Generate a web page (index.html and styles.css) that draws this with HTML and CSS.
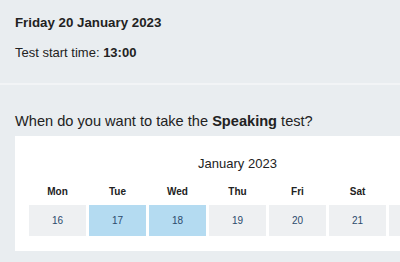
FILE: index.html
```html
<!DOCTYPE html>
<html lang="en">
<head>
<meta charset="utf-8">
<link rel="stylesheet" href="styles.css">
</head>
<body>
<section class="summary">
  <h2 class="date-title">Friday 20 January 2023</h2>
  <p class="start-time">Test start time: <strong>13:00</strong></p>
</section>
<div class="divider"></div>
<section class="booking">
  <p class="question">When do you want to take the <strong>Speaking</strong> test?</p>
  <div class="card">
    <div class="month">January 2023</div>
    <div class="grid heads">
      <div>Mon</div><div>Tue</div><div>Wed</div><div>Thu</div><div>Fri</div><div>Sat</div><div></div>
    </div>
    <div class="grid days">
      <div class="day">16</div>
      <div class="day selected">17</div>
      <div class="day selected">18</div>
      <div class="day">19</div>
      <div class="day">20</div>
      <div class="day">21</div>
      <div class="day"></div>
    </div>
  </div>
</section>
</body>
</html>
```

FILE: styles.css
```css
html, body {
  margin: 0;
  padding: 0;
  overflow: hidden;
}
body {
  background: #e9edf0;
  font-family: "Liberation Sans", Arial, sans-serif;
  color: #222;
}
.summary {
  padding: 15px 15px 0;
  height: 68px;
}
.date-title {
  margin: 0;
  font-size: 13.3px;
  line-height: 16px;
  font-weight: bold;
}
.start-time {
  margin: 14px 0 0;
  font-size: 13px;
  line-height: 16px;
}
.divider {
  height: 2px;
  background: #f2f4f6;
}
.booking {
  padding: 27px 0 0 15px;
}
.question {
  margin: 0 0 6px;
  font-size: 14.6px;
  line-height: 18px;
}
.card {
  background: #fff;
  width: 445px;
  box-sizing: border-box;
  padding: 20px 14px 15px;
}
.month {
  text-align: center;
  font-size: 13px;
  line-height: 16px;
  width: 417px;
}
.grid {
  display: grid;
  grid-template-columns: repeat(7, 57px);
  column-gap: 3px;
}
.heads {
  margin-top: 14px;
  font-size: 10px;
  line-height: 12px;
  font-weight: bold;
  text-align: center;
  color: #222;
}
.days {
  margin-top: 7px;
}
.day {
  height: 31px;
  background: #eef0f2;
  color: #2c4a6c;
  font-size: 10px;
  display: flex;
  align-items: center;
  justify-content: center;
}
.day.selected {
  background: #b4dbf1;
}
```
